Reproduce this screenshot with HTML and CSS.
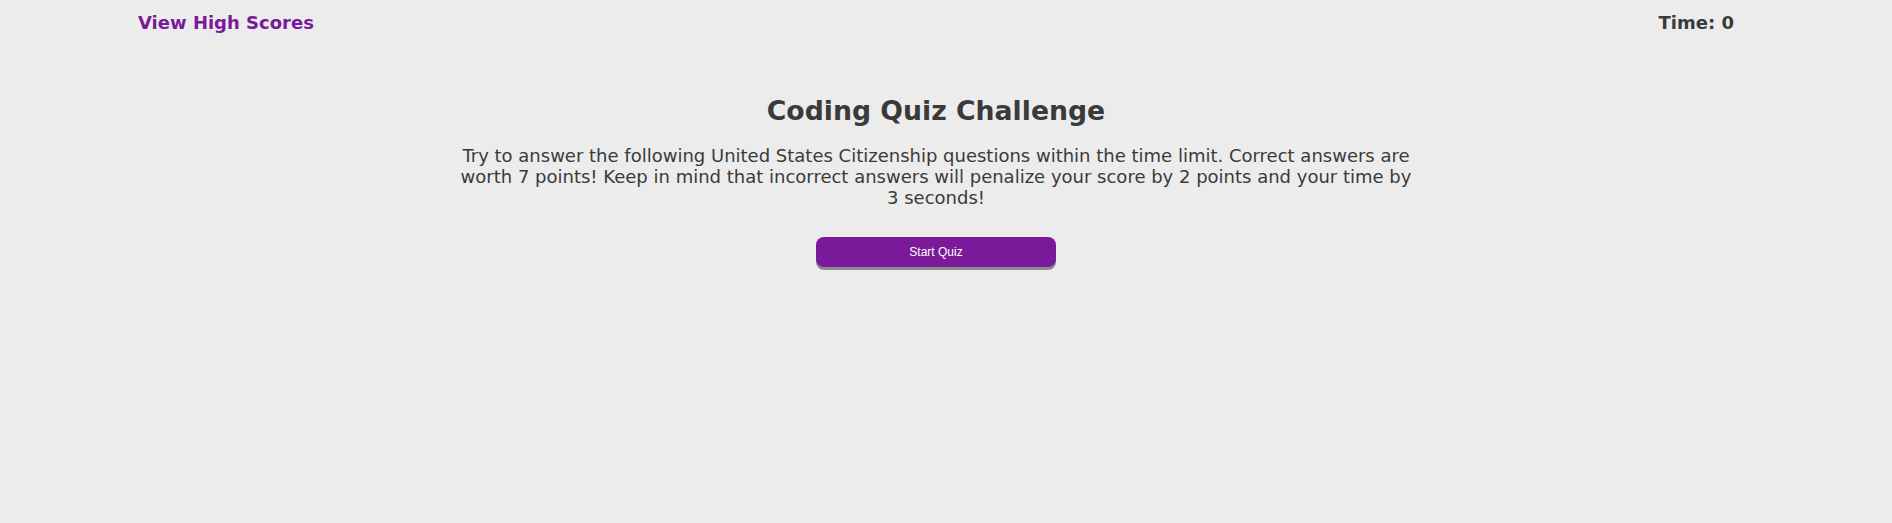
FILE: index.html
```html
<!DOCTYPE html>
<html>
<head>
<meta charset="utf-8">
<link rel="stylesheet" href="styles.css">
</head>
<body>
<div class="page">
  <header class="topbar">
    <a class="scores-link" href="#">View High Scores</a>
    <div class="timer">Time: 0</div>
  </header>
  <main class="intro">
    <h1 class="title">Coding Quiz Challenge</h1>
    <p class="desc">Try to answer the following United States Citizenship questions within the time limit. Correct answers are worth 7 points! Keep in mind that incorrect answers will penalize your score by 2 points and your time by 3 seconds!</p>
    <button class="start-btn">Start Quiz</button>
  </main>
</div>
</body>
</html>
```
FILE: styles.css
```css
html, body {
  margin: 0;
  padding: 0;
  background: #ececec;
  height: 100%;
}
body {
  font-family: Verdana, "DejaVu Sans", sans-serif;
  color: #3a3a3a;
}
.page {
  margin-right: 20px;
}
.topbar {
  display: flex;
  justify-content: space-between;
  align-items: center;
  padding: 10px 138px 0 138px;
  height: 24px;
}
.scores-link {
  color: #7a199a;
  font-weight: bold;
  font-size: 18px;
  text-decoration: none;
}
.timer {
  font-weight: bold;
  font-size: 18px;
}
.intro {
  display: flex;
  flex-direction: column;
  align-items: center;
  margin-top: 61px;
}
.title {
  margin: 0;
  font-size: 26.7px;
  font-weight: bold;
  line-height: 32px;
}
.desc {
  width: 960px;
  margin: 18px 0 0;
  text-align: center;
  font-size: 18px;
  line-height: 21px;
}
.start-btn {
  margin-top: 29px;
  width: 240px;
  height: 30px;
  border: none;
  border-radius: 8px;
  background: #7a199a;
  color: #fff;
  font-family: "Liberation Sans", Arial, sans-serif;
  font-size: 12px;
  box-shadow: 0 3px 0 #8a8a8a;
}
```
